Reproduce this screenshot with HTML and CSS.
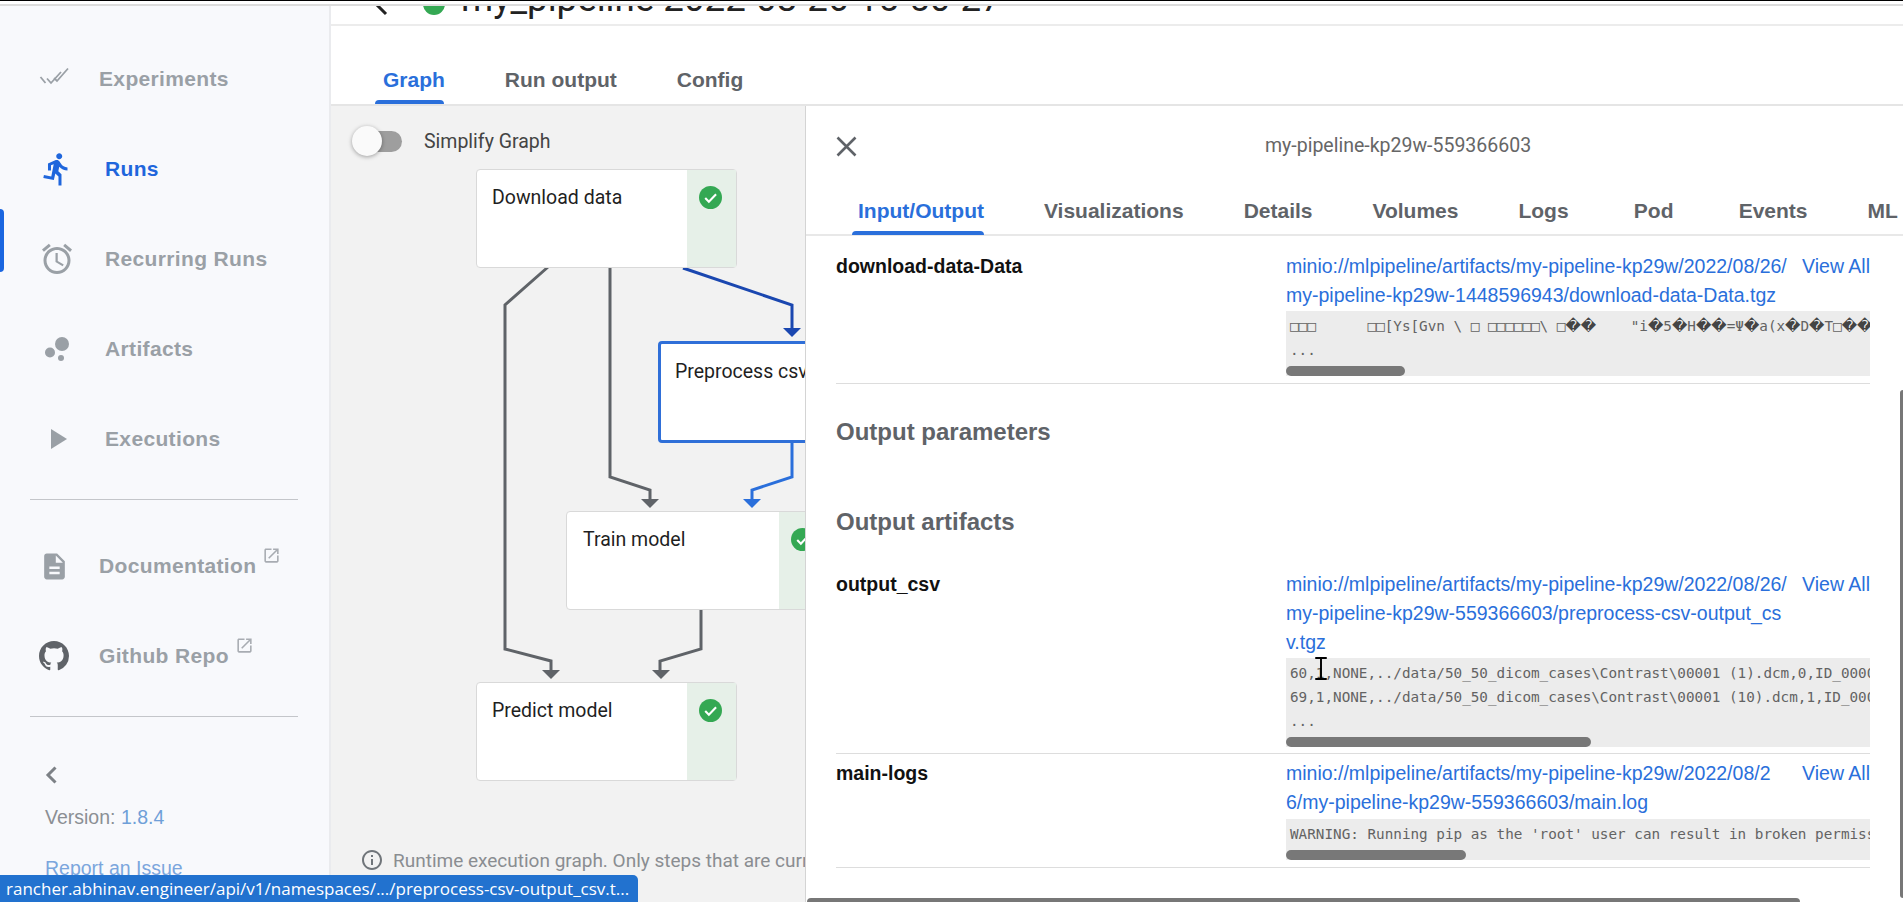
FILE: index.html
```html
<!DOCTYPE html>
<html lang="en">
<head>
<meta charset="utf-8">
<title>my_pipeline run</title>
<link rel="stylesheet" href="styles.css">
</head>
<body>
<div class="frame-top"></div>
<div class="app">
  <nav class="sidebar">
    <div class="nav-indicator"></div>
    <a class="nav-item nav-item--narrow">
      <svg class="nav-icon" viewBox="39 61 36 36"><path d="M40.500 77l5 6M47 78.500l4 4.500 10-11M54 78l3 3 11-12.500" fill="none" stroke="currentColor" stroke-width="1.800"/></svg>
      <span>Experiments</span>
    </a>
    <a class="nav-item nav-item--active">
      <svg class="nav-icon" viewBox="0 0 24 24"><path d="M13.490 5.480c1.100 0 2-.9 2-2s-.9-2-2-2-2 .9-2 2 .9 2 2 2zm-3.600 13.900l1-4.400 2.100 2v6h2v-7.500l-2.100-2 .6-3c1.300 1.500 3.300 2.500 5.500 2.500v-2c-1.900 0-3.500-1-4.300-2.400l-1-1.600c-.4-.6-1-1-1.700-1-.3 0-.5.100-.8.100l-5.200 2.200v4.700h2v-3.400l1.800-.7-1.600 8.100-4.900-1-.4 2 7 1.400z" fill="currentColor"/></svg>
      <span>Runs</span>
    </a>
    <a class="nav-item">
      <svg class="nav-icon" viewBox="0 0 24 24"><path d="M22 5.720l-4.600-3.860-1.290 1.530 4.600 3.860L22 5.720zM7.880 3.390L6.600 1.860 2 5.710l1.290 1.530 4.590-3.850zM12.500 8H11v6l4.750 2.850.75-1.230-4-2.370V8zM12 4c-4.970 0-9 4.030-9 9s4.030 9 9 9 9-4.030 9-9-4.030-9-9-9zm0 16c-3.870 0-7-3.130-7-7s3.130-7 7-7 7 3.130 7 7-3.130 7-7 7z" fill="currentColor"/></svg>
      <span>Recurring Runs</span>
    </a>
    <a class="nav-item">
      <svg class="nav-icon" viewBox="39 331 36 36"><circle cx="62" cy="344" r="7" fill="currentColor"/><circle cx="50" cy="352.500" r="5" fill="currentColor"/><circle cx="61" cy="358" r="3" fill="currentColor"/></svg>
      <span>Artifacts</span>
    </a>
    <a class="nav-item">
      <svg class="nav-icon" viewBox="39 421 36 36"><path d="M51 429l16 10-16 10z" fill="currentColor"/></svg>
      <span>Executions</span>
    </a>
    <hr class="nav-rule nav-rule--first">
    <a class="nav-item nav-item--narrow">
      <svg class="nav-icon nav-icon--doc" viewBox="0 0 24 24"><path d="M14 2H6c-1.100 0-1.990.9-1.990 2L4 20c0 1.100.89 2 1.990 2H18c1.100 0 2-.9 2-2V8l-6-6zm2 16H8v-2h8v2zm0-4H8v-2h8v2zm-3-5V3.500L18.500 9H13z" fill="currentColor"/></svg>
      <span>Documentation</span>
      <svg class="nav-ext" viewBox="0 0 24 24"><path d="M19 19H5V5h7V3H5c-1.110 0-2 .9-2 2v14c0 1.100.89 2 2 2h14c1.100 0 2-.9 2-2v-7h-2v7zM14 3v2h3.590l-9.830 9.830 1.410 1.410L19 6.410V10h2V3h-7z" fill="currentColor"/></svg>
    </a>
    <a class="nav-item nav-item--narrow">
      <svg class="nav-icon nav-icon--gh" viewBox="0 0 16 16"><path d="M8 0C3.580 0 0 3.580 0 8c0 3.540 2.290 6.530 5.470 7.590.4.070.55-.17.55-.38 0-.19-.01-.82-.01-1.490-2.010.37-2.530-.49-2.690-.94-.09-.23-.48-.94-.82-1.130-.28-.15-.68-.52-.01-.53.63-.01 1.080.58 1.230.82.72 1.210 1.870.87 2.330.66.07-.52.28-.87.51-1.070-1.780-.2-3.640-.89-3.640-3.950 0-.87.31-1.590.82-2.150-.08-.2-.36-1.020.08-2.120 0 0 .67-.21 2.200.82.64-.18 1.320-.27 2-.27.68 0 1.360.09 2 .27 1.530-1.040 2.200-.82 2.200-.82.44 1.100.16 1.920.08 2.120.51.56.82 1.270.82 2.150 0 3.070-1.870 3.750-3.650 3.950.29.25.54.73.54 1.480 0 1.070-.01 1.930-.01 2.200 0 .21.15.46.55.38A8.013 8.013 0 0016 8c0-4.420-3.580-8-8-8z" fill="currentColor"/></svg>
      <span>Github Repo</span>
      <svg class="nav-ext" viewBox="0 0 24 24"><path d="M19 19H5V5h7V3H5c-1.110 0-2 .9-2 2v14c0 1.100.89 2 2 2h14c1.100 0 2-.9 2-2v-7h-2v7zM14 3v2h3.590l-9.830 9.830 1.410 1.410L19 6.410V10h2V3h-7z" fill="currentColor"/></svg>
    </a>
    <hr class="nav-rule">
    <svg class="nav-collapse" viewBox="0 0 12 18"><path d="M10.500 1.500L3 9l7.500 7.500" fill="none" stroke="currentColor" stroke-width="3"/></svg>
    <div class="nav-version">Version: <a class="nav-link">1.8.4</a></div>
    <a class="nav-link nav-report">Report an Issue</a>
  </nav>

  <main class="main">
    <header class="page-head">
      <svg class="page-back" viewBox="0 0 24 24"><path d="M16 2L6 12l10 10" fill="none" stroke="#222" stroke-width="3"/></svg>
      <span class="page-status"></span>
      <span class="page-title">my_pipeline 2022-08-26 15-50-27</span>
    </header>
    <div class="tabs">
      <span class="tab tab--active">Graph</span>
      <span class="tab">Run output</span>
      <span class="tab">Config</span>
    </div>
    <div class="work">
      <section class="graph">
        <svg class="edges" viewBox="331 106 474 796">
          <g class="edge-gray">
            <path d="M548 267L505 305V649L551 661V672"/>
            <path d="M610 267V477L650 490V501"/>
            <path d="M701 609V649L660 661V672"/>
          </g>
          <path class="edge-dark" d="M683 268L792 305V330"/>
          <path class="edge-blue" d="M792 443V477L752 490V501"/>
          <path class="tip-gray" d="M542 670h18l-9 9z"/>
          <path class="tip-gray" d="M641 499h18l-9 9z"/>
          <path class="tip-gray" d="M652 670h18l-9 9z"/>
          <path class="tip-dark" d="M783 328h18l-9 9z"/>
          <path class="tip-blue" d="M743 499h18l-9 9z"/>
        </svg>
        <div class="node node--download"><span class="node-label">Download data</span>
          <span class="node-status"><svg class="check" viewBox="0 0 24 24"><circle cx="12" cy="12" r="12" fill="#34a853"/><path d="M6.500 12.500l3.800 3.800 7.500-7.800" fill="none" stroke="#fff" stroke-width="2.200"/></svg></span></div>
        <div class="node node--preprocess"><span class="node-label">Preprocess csv output</span></div>
        <div class="node node--train"><span class="node-label">Train model</span>
          <span class="node-status"><svg class="check" viewBox="0 0 24 24"><circle cx="12" cy="12" r="12" fill="#34a853"/><path d="M6.500 12.500l3.800 3.800 7.500-7.800" fill="none" stroke="#fff" stroke-width="2.200"/></svg></span></div>
        <div class="node node--predict"><span class="node-label">Predict model</span>
          <span class="node-status"><svg class="check" viewBox="0 0 24 24"><circle cx="12" cy="12" r="12" fill="#34a853"/><path d="M6.500 12.500l3.800 3.800 7.500-7.800" fill="none" stroke="#fff" stroke-width="2.200"/></svg></span></div>

        <div class="simplify">
          <span class="switch"><span class="switch-thumb"></span></span>
          <span>Simplify Graph</span>
        </div>
        <div class="legend">
          <svg class="legend-icon" viewBox="0 0 24 24"><path d="M11 7h2v2h-2zm0 4h2v6h-2zm1-9C6.480 2 2 6.480 2 12s4.480 10 10 10 10-4.480 10-10S17.520 2 12 2zm0 18c-4.410 0-8-3.590-8-8s3.590-8 8-8 8 3.590 8 8-3.590 8-8 8z" fill="currentColor"/></svg>
          <span>Runtime execution graph. Only steps that are currently running or have already completed are shown.</span>
        </div>
      </section>

      <aside class="panel">
        <div class="panel-head">
          <svg class="panel-close" viewBox="0 0 21 21"><path d="M1.500 1.500l18 18M19.500 1.500l-18 18" fill="none" stroke="#5f6368" stroke-width="2.600"/></svg>
          <span class="panel-title">my-pipeline-kp29w-559366603</span>
        </div>
        <div class="panel-tabs">
          <span class="ptab ptab--active">Input/Output</span>
          <span class="ptab">Visualizations</span>
          <span class="ptab">Details</span>
          <span class="ptab">Volumes</span>
          <span class="ptab">Logs</span>
          <span class="ptab">Pod</span>
          <span class="ptab">Events</span>
          <span class="ptab">ML Metadata</span>
        </div>
        <div class="panel-body">
          <div class="artifact">
            <div class="art-name">download-data-Data</div>
            <div>
              <div class="art-links"><a class="art-path">minio://mlpipeline/artifacts/my-pipeline-kp29w/2022/08/26/<br>my-pipeline-kp29w-1448596943/download-data-Data.tgz</a><a class="art-all">View All</a></div>
              <div class="preview">
                <div class="preview-lines">□□□      □□[Ys[Gvn \ □ □□□□□□\ □<span class="bad">�</span><span class="bad">�</span>    "i<span class="bad">�</span>5<span class="bad">�</span>H<span class="bad">�</span><span class="bad">�</span>=Ψ<span class="bad">�</span>a(x<span class="bad">�</span>D<span class="bad">�</span>T□<span class="bad">�</span><span class="bad">�</span>
...</div>
                <div class="thumb thumb--a"></div>
              </div>
            </div>
          </div>
          <h3 class="section section--params">Output parameters</h3>
          <h3 class="section section--artifacts">Output artifacts</h3>
          <div class="artifact artifact--wrap">
            <div class="art-name">output_csv</div>
            <div>
              <div class="art-links"><a class="art-path">minio://mlpipeline/artifacts/my-pipeline-kp29w/2022/08/26/<br>my-pipeline-kp29w-559366603/preprocess-csv-output_cs<br>v.tgz</a><a class="art-all">View All</a></div>
              <div class="preview">
                <div class="preview-lines">60,1,NONE,../data/50_50_dicom_cases\Contrast\00001 (1).dcm,0,ID_0000
69,1,NONE,../data/50_50_dicom_cases\Contrast\00001 (10).dcm,1,ID_0000
...</div>
                <div class="thumb thumb--b"></div>
              </div>
            </div>
          </div>
          <div class="artifact artifact--tight">
            <div class="art-name">main-logs</div>
            <div>
              <div class="art-links"><a class="art-path">minio://mlpipeline/artifacts/my-pipeline-kp29w/2022/08/2<br>6/my-pipeline-kp29w-559366603/main.log</a><a class="art-all">View All</a></div>
              <div class="preview preview--gap">
                <div class="preview-lines">WARNING: Running pip as the 'root' user can result in broken permissions</div>
                <div class="thumb thumb--c"></div>
              </div>
            </div>
          </div>
        </div>
        <div class="panel-scroll-v"></div>
        <div class="panel-scroll-h"></div>
      </aside>
    </div>
  </main>
</div>
<svg class="cursor" viewBox="0 0 14 24"><path d="M1 1h12M7 1v22M1 23h12" fill="none" stroke="#000" stroke-width="2"/></svg>
<div class="status-bubble">rancher.abhinav.engineer/api/v1/namespaces/.../preprocess-csv-output_csv.t...</div>
</body>
</html>
```
FILE: styles.css
```css
* { box-sizing: border-box; }
html, body { margin: 0; height: 100%; }
body {
  position: relative;
  height: 100vh;
  overflow: hidden;
  display: flex;
  flex-direction: column;
  background: #fff;
  font-family: "Liberation Sans", Arial, sans-serif;
  color: #202124;
}
.frame-top {
  height: 6px;
  flex: none;
  background: #fff;
  border-top: 1px solid #000;
  border-bottom: 2px solid #dcdcdc;
}
.app { flex: 1; display: flex; min-height: 0; }

/* sidebar */
.sidebar {
  position: relative;
  width: 331px;
  flex: none;
  padding-top: 28px;
  background: #f8f9fc;
  border-right: 2px solid #eaebee;
  overflow: hidden;
}
.nav-indicator {
  position: absolute;
  left: 0;
  top: 203px;
  width: 4px;
  height: 63px;
  background: #1a66e0;
  border-radius: 0 4px 4px 0;
}
.nav-item {
  display: flex;
  align-items: center;
  height: 90px;
  padding-left: 39px;
  font-size: 21px;
  font-weight: 700;
  letter-spacing: .35px;
  color: #9aa0a6;
}
.nav-item--active { color: #1f66dc; }
.nav-icon { width: 36px; height: 36px; flex: none; margin-right: 30px; }
.nav-item--narrow .nav-icon { margin-right: 24px; }
.nav-icon--doc { width: 31px; height: 31px; }
.nav-item--narrow .nav-icon--doc { margin-right: 29px; }
.nav-item--narrow .nav-icon--gh { width: 30px; height: 30px; color: #5f6368; margin-right: 30px; }
.nav-ext { width: 19px; height: 19px; margin: -22px 0 0 6px; color: #a8acb2; }
.nav-rule { margin: 15px 31px 0 30px; border: 0; border-top: 1px solid #c4c6ca; }
.nav-rule--first { margin-bottom: 21px; }
.nav-collapse { display: block; width: 12px; height: 18px; margin: 49px 0 0 45px; color: #7d8186; }
.nav-version { margin: 22px 0 0 45px; font-size: 19.500px; line-height: 22px; color: #8b8f94; }
.nav-link { color: #6f9fd8; }
.nav-report { display: block; margin: 29px 0 0 45px; font-size: 19.500px; line-height: 22px; color: #7ba6dd; }

/* main */
.main { flex: 1; min-width: 0; display: flex; flex-direction: column; }
.page-head {
  height: 20px;
  flex: none;
  display: flex;
  align-items: flex-end;
  overflow: hidden;
  padding-left: 39px;
  border-bottom: 2px solid #ececec;
}
.page-back { width: 24px; height: 24px; flex: none; margin-bottom: 8px; }
.page-status { width: 22px; height: 22px; flex: none; margin: 0 16px 9px 29px; border-radius: 50%; background: #34a853; }
.page-title { font-family: Roboto, sans-serif; font-size: 36.700px; line-height: 36px; white-space: nowrap; padding-bottom: 7px; color: #222; }
.tabs {
  height: 80px;
  flex: none;
  display: flex;
  padding-left: 22px;
  align-items: flex-end;
  border-bottom: 2px solid #e5e5e5;
}
.tab {
  position: relative;
  padding: 0 30px 12px;
  font-size: 21px;
  line-height: 24px;
  font-weight: 700;
  color: #5f6368;
}
.tab--active { color: #2a6fdb; }
.tab--active::after {
  content: "";
  position: absolute;
  left: 22px;
  right: 31px;
  bottom: 0;
  height: 4px;
  background: #2a6fdb;
  border-radius: 4px 4px 0 0;
}
.work { flex: 1; display: flex; min-height: 0; }

/* graph */
.graph {
  position: relative;
  width: 474px;
  flex: none;
  display: flex;
  flex-direction: column;
  justify-content: space-between;
  overflow: hidden;
  background: #f2f2f2;
  font-family: Roboto, sans-serif;
}
.edges { position: absolute; left: 0; top: 0; width: 474px; height: 796px; }
.edges path { fill: none; stroke-width: 3; }
.edge-gray path { stroke: #5f6368; }
.edge-dark { stroke: #1a47b0; }
.edge-blue { stroke: #2a6fdb; }
.edges .tip-gray { fill: #5f6368; stroke: none; }
.edges .tip-dark { fill: #1a47b0; stroke: none; }
.edges .tip-blue { fill: #2a6fdb; stroke: none; }
.node {
  position: absolute;
  background: #fff;
  border: 1px solid #d9d9d9;
  border-radius: 4px;
  height: 99px;
  width: 261px;
  display: flex;
  justify-content: space-between;
  font-size: 19.500px;
  color: #1f1f1f;
}
.node-label { padding: 15px 0 0 15px; line-height: 26px; white-space: nowrap; }
.node-status { width: 49px; flex: none; background: #e6f0e8; padding: 16px 0 0 12px; }
.check { display: block; width: 23px; height: 23px; }
.node--download { left: 145px; top: 63px; }
.node--train { left: 235px; top: 405px; width: 263px; }
.node--predict { left: 145px; top: 576px; }
.node--preprocess { left: 327px; top: 235px; height: 102px; border: 3px solid #2f6fd8; }
.node--preprocess .node-label { padding-left: 14px; }
.node--train .node-label { padding-left: 16px; }
.simplify {
  position: relative;
  display: flex;
  align-items: center;
  height: 32px;
  margin-top: 19px;
  padding-left: 21px;
  font-size: 19.500px;
  color: #444;
}
.switch { position: relative; width: 44px; height: 21px; margin-right: 22px; background: #9e9e9e; border-radius: 11px; margin-left: 6px; }
.switch-thumb {
  position: absolute;
  left: -6px;
  top: -5px;
  width: 30px;
  height: 30px;
  background: #fafafa;
  border-radius: 50%;
  box-shadow: 0 1px 4px rgba(0,0,0,.35);
}
.legend {
  position: relative;
  display: flex;
  align-items: center;
  height: 28px;
  margin-bottom: 28px;
  padding-left: 29px;
  font-size: 19px;
  color: #8a8d91;
  white-space: nowrap;
}
.legend-icon { width: 24px; height: 24px; flex: none; margin-right: 9px; color: #70757a; }

/* panel */
.panel {
  position: relative;
  flex: 1;
  min-width: 0;
  overflow: hidden;
  background: #fff;
  border-left: 1px solid #d4d4d4;
}
.panel-head { height: 76px; display: flex; align-items: center; padding-left: 30px; }
.panel-close { width: 21px; height: 21px; flex: none; margin-top: 5px; }
.panel-title { margin: 3px 0 0 408px; font-family: Roboto, sans-serif; font-size: 19.500px; color: #666; white-space: nowrap; }
.panel-tabs {
  display: flex;
  height: 54px;
  padding-left: 22px;
  white-space: nowrap;
  border-bottom: 2px solid #e8e8e8;
}
.ptab {
  position: relative;
  flex: none;
  min-width: 110px;
  padding: 17px 30px 0;
  text-align: center;
  font-size: 21px;
  line-height: 24px;
  font-weight: 700;
  color: #5f6368;
}
.ptab--active { color: #2a6fdb; }
.ptab--active::after {
  content: "";
  position: absolute;
  left: 24px;
  right: 30px;
  bottom: -1px;
  height: 4px;
  background: #2a6fdb;
  border-radius: 4px 4px 0 0;
}
.panel-body { width: 1065px; margin-left: 30px; }
.artifact {
  display: grid;
  grid-template-columns: 450px 584px;
  padding: 16px 0 7px;
  border-bottom: 1px solid #ddd;
  width: 1034px;
}
.artifact--wrap { padding-bottom: 6px; }
.artifact--tight { padding-top: 5px; }
.art-name { font-size: 19.500px; font-weight: 700; line-height: 29px; color: #111; }
.art-links { display: flex; justify-content: space-between; font-size: 19.500px; line-height: 29px; color: #2a6fdb; }
.art-path { white-space: nowrap; }
.preview { margin-top: 1px; background: #ececec; overflow: hidden; }
.preview--gap { margin-top: 2px; }
.preview-lines {
  padding: 3px 0 4px 4px;
  font-family: "DejaVu Sans Mono", monospace;
  font-size: 14.300px;
  line-height: 24px;
  white-space: pre;
  color: #636363;
}
.bad {
  display: inline-block;
  width: 15.400px;
  text-align: center;
  font-family: "DejaVu Sans", sans-serif;
  font-size: 15px;
  line-height: 20px;
  color: #444;
}
.thumb { height: 10px; background: #787878; border-radius: 5px; }
.thumb--a { width: 119px; }
.thumb--b { width: 305px; }
.thumb--c { width: 180px; }
.section { margin: 0; font-size: 24px; line-height: 24px; font-weight: 700; color: #5f6368; }
.section--params { margin: 36px 0 66px; }
.section--artifacts { margin: 0 0 20px; }
.panel-scroll-v {
  position: absolute;
  right: 0;
  top: 284px;
  bottom: 4px;
  width: 3px;
  background: #777;
  border-radius: 3px 0 0 3px;
}
.panel-scroll-h {
  position: absolute;
  left: 1px;
  bottom: 0;
  width: 993px;
  height: 4px;
  background: #777;
  border-radius: 4px 4px 0 0;
}

/* overlays */
.cursor { position: absolute; left: 1314px; top: 657px; width: 14px; height: 23px; }
.status-bubble {
  position: absolute;
  left: 0;
  bottom: 0;
  width: 638px;
  height: 27px;
  padding-left: 6px;
  background: #2272cf;
  border-radius: 0 5px 0 0;
  font-family: "Open Sans", sans-serif;
  font-size: 17px;
  line-height: 28px;
  color: #fff;
  white-space: nowrap;
  overflow: hidden;
}
```
